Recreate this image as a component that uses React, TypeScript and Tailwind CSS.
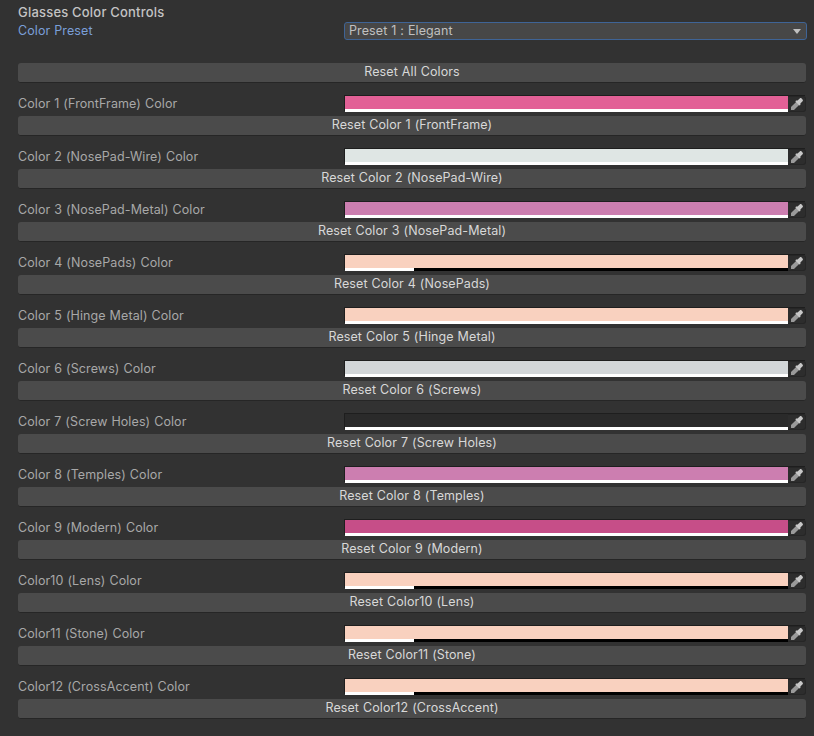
const rows = [
  { l: "Color 1 (FrontFrame)", c: "#e26096", b: "full" },
  { l: "Color 2 (NosePad-Wire)", c: "#dfe6e4", b: "full" },
  { l: "Color 3 (NosePad-Metal)", c: "#cc7eb0", b: "full" },
  { l: "Color 4 (NosePads)", c: "#f9d1bf", b: "part" },
  { l: "Color 5 (Hinge Metal)", c: "#f9d1bf", b: "full" },
  { l: "Color 6 (Screws)", c: "#d2d6d8", b: "full" },
  { l: "Color 7 (Screw Holes)", c: "#2a2a2a", b: "full" },
  { l: "Color 8 (Temples)", c: "#cc7eb0", b: "full" },
  { l: "Color 9 (Modern)", c: "#c64e88", b: "full" },
  { l: "Color10 (Lens)", c: "#f9d1bf", b: "part" },
  { l: "Color11 (Stone)", c: "#f9d1bf", b: "part" },
  { l: "Color12 (CrossAccent)", c: "#f9d1bf", b: "part" },
];

function Btn({ children }: { children: React.ReactNode }) {
  return (
    <button className="flex h-[20px] w-full items-center justify-center rounded-[3px] border-b border-b-[#262626] bg-[#4b4b4b] text-[12.5px] leading-none tracking-[0.1px] [word-spacing:0.3px] text-[#d8d8d8]">
      {children}
    </button>
  );
}

function Dropper() {
  return (
    <svg width="14" height="14" viewBox="0 0 14 14" className="block">
      <path d="M1 13 L1 10 L6.6 4.4 L9.6 7.4 L4 13 Z" fill="#9a9a9a" />
      <path d="M6 3.6 L7.6 3.6 L10 1.2 C11 .4 13.6 3 12.8 4 L10.4 6.4 L10.4 8 L9.4 8.6 L5.4 4.6 Z" fill="#c8c8c8" />
    </svg>
  );
}

function Row({ l, c, b }: { l: string; c: string; b: string }) {
  return (
    <div className="flex flex-col gap-[4px]">
      <div className="flex h-[16px] items-center">
        <div className="w-[327px] shrink-0 text-[12.5px] leading-none tracking-[0.1px] [word-spacing:0.3px] text-[#a8a8a8]">{l} Color</div>
        <div className="flex h-[16px] flex-1 shadow-[-1px_-1px_0_#1e1e1e]">
          <div className="flex flex-1 flex-col">
            <div className="h-[13px]" style={{ backgroundColor: c }} />
            <div className="flex h-[3px] bg-black">
              <div className={b === "full" ? "w-full bg-white" : "w-[69px] bg-white"} />
            </div>
          </div>
          <div className="flex w-[18px] items-center justify-center rounded-r-[3px] border border-l-0 border-[#262626] bg-[#2d2d2d]">
            <Dropper />
          </div>
        </div>
      </div>
      <Btn>Reset {l}</Btn>
    </div>
  );
}

export default function App() {
  return (
    <div
      className="h-[736px] w-[814px] overflow-hidden bg-[#323232] pl-[18px] pr-[8px] pt-[4px]"
      style={{ fontFamily: "Inter, 'Liberation Sans', sans-serif" }}
    >
      <div className="flex h-[15px] translate-y-px items-center text-[13px] font-medium leading-none tracking-[0.2px] text-[#c4c4c4]">Glasses Color Controls</div>
      <div className="mt-[3px] flex h-[18px] items-center">
        <div className="w-[326px] shrink-0 text-[12.5px] leading-none tracking-[0.1px] [word-spacing:0.3px] text-[#7a9fd8]">Color Preset</div>
        <div className="-mr-px flex h-[18px] flex-1 items-center justify-between rounded-[3px] border border-[#3f6496] bg-[#474747] pl-[4px] pr-[4px] text-[12.5px] leading-none tracking-[0.1px] [word-spacing:0.3px] text-[#c0c0c0]">
          <span>Preset 1 : Elegant</span>
          <span className="mr-[1px] h-0 w-0 border-x-[4px] border-t-[5px] border-x-transparent border-t-[#c0c0c0]" />
        </div>
      </div>
      <div className="mt-[23px]">
        <Btn>Reset All Colors</Btn>
      </div>
      <div className="mt-[13px] flex flex-col gap-[13px]">
        {rows.map((r) => (
          <Row key={r.l} {...r} />
        ))}
      </div>
    </div>
  );
}
